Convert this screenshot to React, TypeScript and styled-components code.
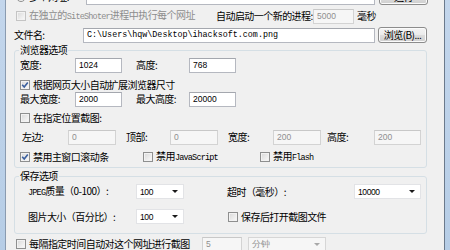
import React from "react";
import styled, { createGlobalStyle } from "styled-components";

const GlobalStyle = createGlobalStyle`
  html, body {
    margin: 0;
    padding: 0;
    background: #f0f0f0;
  }
  body {
    font-family: "Noto Sans CJK SC", "Liberation Sans", sans-serif;
    font-size: 10px;
    line-height: 12px;
    letter-spacing: -0.55px;
    color: #000;
  }
`;

const Window = styled.div`
  display: flex;
  width: 450px;
  height: 250px;
  overflow: hidden;
  background: #f0f0f0;
`;

const Frame = styled.div<{ $side: "left" | "right" }>`
  flex: none;
  width: 5px;
  background: linear-gradient(180deg, #c3d6ec, #b6cde6);
  ${(p) =>
    p.$side === "left"
      ? "border-right: 1px solid #8a9bb0;"
      : "border-left: 1px solid #6b7a8c;"}
`;

const Body = styled.div`
  flex: 1;
  display: flex;
  flex-direction: column;
  margin-top: -11px;
`;

const Row = styled.div<{ $h: number; $mt?: number; $pl?: number }>`
  flex: none;
  display: flex;
  align-items: center;
  height: ${(p) => p.$h}px;
  margin-top: ${(p) => p.$mt ?? 0}px;
  padding-left: ${(p) => p.$pl ?? 0}px;
`;

const Label = styled.span<{ $w?: number; $ml?: number; $muted?: boolean }>`
  flex: none;
  white-space: nowrap;
  width: ${(p) => (p.$w ? `${p.$w}px` : "auto")};
  margin-left: ${(p) => p.$ml ?? 0}px;
  color: ${(p) => (p.$muted ? "#8d8d8d" : "#000")};
`;

const Latin = styled.span`
  font-family: "Liberation Mono", monospace;
  font-size: 8.5px;
  letter-spacing: -0.8px;
`;

const TextBox = styled.div<{ $w: number; $ml?: number; $disabled?: boolean; $path?: boolean }>`
  flex: none;
  box-sizing: border-box;
  width: ${(p) => p.$w}px;
  height: 15px;
  margin-left: ${(p) => p.$ml ?? 0}px;
  display: flex;
  align-items: center;
  padding-left: 3px;
  border: 1px solid ${(p) => (p.$disabled ? "#d3d3d3" : "#b5b8c0")};
  border-top-color: ${(p) => (p.$disabled ? "#c8c8c8" : "#a4a7ae")};
  background: ${(p) => (p.$disabled ? "#f6f6f6" : "#fff")};
  color: ${(p) => (p.$disabled ? "#8f8f8f" : "#000")};
  font-family: ${(p) => (p.$path ? '"Liberation Mono", monospace' : '"Liberation Sans", sans-serif')};
  font-size: ${(p) => (p.$path ? "8.4px" : "8.5px")};
  letter-spacing: 0;
  white-space: nowrap;
  overflow: hidden;
`;

const Combo = styled(TextBox)`
  justify-content: space-between;
  padding-right: 5px;
  border-color: ${(p) => (p.$disabled ? "#d6d6d6" : "#e2e3e6")};
  letter-spacing: -0.4px;
  &::after {
    content: "";
    border-left: 3px solid transparent;
    border-right: 3px solid transparent;
    border-top: 3px solid ${(p) => (p.$disabled ? "#a8a8a8" : "#1a1a1a")};
  }
`;

const Button = styled.div<{ $w: number; $ml?: number }>`
  flex: none;
  box-sizing: border-box;
  width: ${(p) => p.$w}px;
  height: 16px;
  margin-left: ${(p) => p.$ml ?? 0}px;
  display: flex;
  align-items: center;
  justify-content: center;
  border: 1px solid #8c8c8c;
  border-radius: 3px;
  background: linear-gradient(180deg, #f4f4f4 0%, #ebebeb 50%, #dddddd 51%, #cfcfcf 100%);
  box-shadow: inset 0 0 0 1px #fbfbfb;
  white-space: nowrap;
`;

const Box = styled.span<{ $round?: boolean; $disabled?: boolean }>`
  flex: none;
  box-sizing: border-box;
  width: 10px;
  height: 10px;
  display: flex;
  align-items: center;
  justify-content: center;
  border: 1px solid ${(p) => (p.$disabled ? "#c4c4c4" : "#8e8f8f")};
  border-radius: ${(p) => (p.$round ? "50%" : "0")};
  background: linear-gradient(135deg, #d8d8d8, #fbfbfb);
  box-shadow: inset 0 0 0 1px #f2f2f2;
`;

const CheckItem = styled.label<{ $w?: number; $ml?: number }>`
  flex: none;
  display: flex;
  align-items: center;
  gap: 3px;
  width: ${(p) => (p.$w ? `${p.$w}px` : "auto")};
  margin-left: ${(p) => p.$ml ?? 0}px;
  white-space: nowrap;
`;

const Group = styled.fieldset<{ $mt?: number; $pb: number }>`
  flex: none;
  box-sizing: border-box;
  width: 413px;
  margin: ${(p) => p.$mt ?? 0}px 0 0 8px;
  padding: 0 0 ${(p) => p.$pb}px 0;
  min-width: 0;
  border: 1px solid #d5dfe5;
  border-radius: 3px;
  display: flex;
  flex-direction: column;
`;

const Legend = styled.legend`
  margin-left: 4px;
  padding: 0 1px;
  line-height: 14px;
  height: 14px;
`;

const Check = ({
  label,
  checked,
  disabled,
  round,
  w,
  ml,
}: {
  label: React.ReactNode;
  checked?: boolean;
  disabled?: boolean;
  round?: boolean;
  w?: number;
  ml?: number;
}) => (
  <CheckItem $w={w} $ml={ml}>
    <Box $round={round} $disabled={disabled}>
      {checked && (
        <svg width="8" height="8" viewBox="0 0 8 8">
          <path d="M1.2 3.8 L3.2 6 L6.8 1.4" fill="none" stroke="#3b5f9e" strokeWidth="1.6" />
        </svg>
      )}
    </Box>
    <Label $muted={disabled}>{label}</Label>
  </CheckItem>
);

const App = () => {
  return (
    <Window>
      <GlobalStyle />
      <Frame $side="left" />
      <Body>
        <Row $h={16} $pl={10}>
          <Check round label="多个网址:" w={70} />
          <TextBox $w={289} />
          <Button $w={49} $ml={4}>
            运行
          </Button>
        </Row>

        <Row $h={16} $mt={3} $pl={10}>
          <Check
            disabled
            w={200}
            label={
              <>
                在独立的<Latin>SiteShoter</Latin>进程中执行每个网址
              </>
            }
          />
          <Label $w={97}>自动启动一个新的进程:</Label>
          <TextBox $w={41} $disabled>
            5000
          </TextBox>
          <Label $ml={3}>毫秒</Label>
        </Row>

        <Row $h={16} $mt={3} $pl={8}>
          <Label $w={69}>文件名:</Label>
          <TextBox $w={292} $path>
            C:\Users\hqw\Desktop\ihacksoft.com.png
          </TextBox>
          <Button $w={49} $ml={3}>
            浏览(B)...
          </Button>
        </Row>

        <Group $pb={3}>
          <Legend>浏览器选项</Legend>
          <Row $h={16} $pl={5}>
            <Label $w={55}>宽度:</Label>
            <TextBox $w={47}>1024</TextBox>
            <Label $w={53} $ml={14}>
              高度:
            </Label>
            <TextBox $w={47}>768</TextBox>
          </Row>
          <Row $h={12} $mt={6} $pl={5}>
            <Check checked label="根据网页大小自动扩展浏览器尺寸" />
          </Row>
          <Row $h={14} $mt={1} $pl={5}>
            <Label $w={55}>最大宽度:</Label>
            <TextBox $w={47}>2000</TextBox>
            <Label $w={53} $ml={14}>
              最大高度:
            </Label>
            <TextBox $w={47}>20000</TextBox>
          </Row>
          <Row $h={14} $mt={5} $pl={5}>
            <Check label="在指定位置截图:" />
          </Row>
          <Row $h={16} $mt={4} $pl={7}>
            <Label $w={46}>左边:</Label>
            <TextBox $w={48} $disabled>
              0
            </TextBox>
            <Label $w={44} $ml={10}>
              顶部:
            </Label>
            <TextBox $w={48} $disabled>
              0
            </TextBox>
            <Label $w={45} $ml={10}>
              宽度:
            </Label>
            <TextBox $w={48} $disabled>
              200
            </TextBox>
            <Label $w={47} $ml={6}>
              高度:
            </Label>
            <TextBox $w={47} $disabled>
              200
            </TextBox>
          </Row>
          <Row $h={14} $mt={5} $pl={5}>
            <Check checked w={123} label="禁用主窗口滚动条" />
            <Check
              w={117}
              label={
                <>
                  禁用<Latin>JavaScript</Latin>
                </>
              }
            />
            <Check
              label={
                <>
                  禁用<Latin>Flash</Latin>
                </>
              }
            />
          </Row>
        </Group>

        <Group $mt={1} $pb={9}>
          <Legend>保存选项</Legend>
          <Row $h={15} $mt={1} $pl={13}>
            <Label $w={108}>
              <Latin>JPEG</Latin>质量（0-100）:
            </Label>
            <Combo $w={48}>100</Combo>
            <Label $w={127} $ml={43}>
              超时（毫秒）:
            </Label>
            <Combo $w={67}>10000</Combo>
          </Row>
          <Row $h={15} $mt={10} $pl={13}>
            <Label $w={108}>图片大小（百分比）:</Label>
            <Combo $w={48}>100</Combo>
            <Check ml={44} label="保存后打开截图文件" />
          </Row>
        </Group>

        <Row $h={14} $mt={3} $pl={10}>
          <Check w={186} label="每隔指定时间自动对这个网址进行截图" />
          <TextBox $w={40} $disabled>
            5
          </TextBox>
          <Combo $w={78} $ml={6} $disabled>
            分钟
          </Combo>
        </Row>
      </Body>
      <Frame $side="right" />
    </Window>
  );
};

export default App;
